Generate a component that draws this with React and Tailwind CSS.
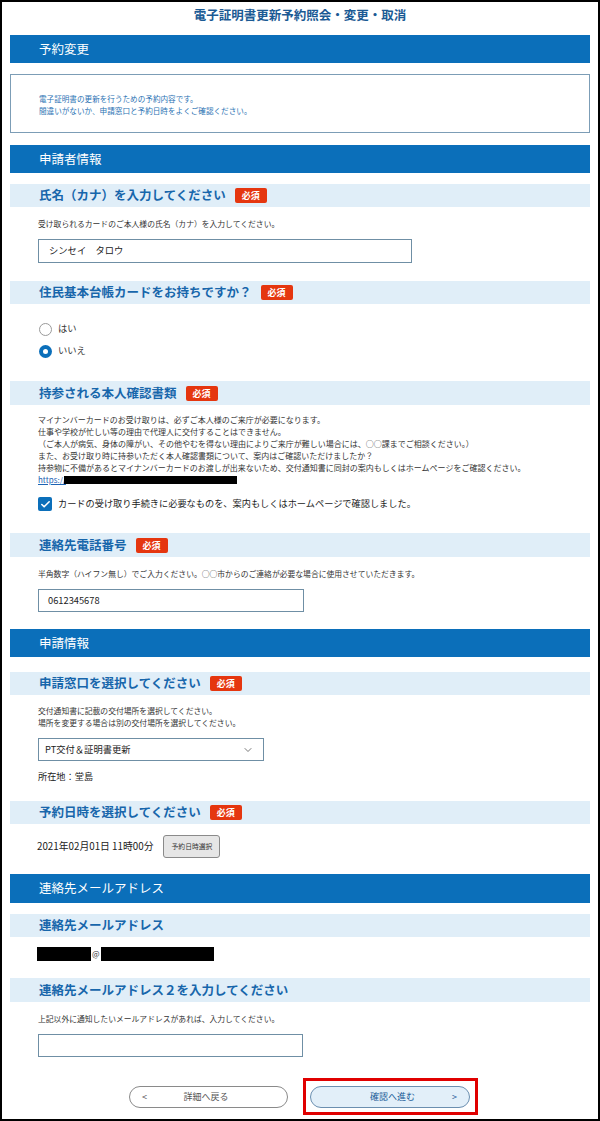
import { ChevronDown, Check } from "lucide-react";

const FONT = { fontFamily: "'Noto Sans CJK JP', 'Noto Sans', sans-serif" };

function Band({ children, className = "" }) {
  return (
    <div className={`h-[28px] bg-[#0b6fba] flex items-center pl-[29px] text-[12.5px] text-white ${className}`}>
      {children}
    </div>
  );
}

function Badge() {
  return (
    <span className="ml-[9px] inline-flex items-center h-[15px] px-[7px] rounded-[2px] bg-[#e5360f] text-white text-[9px] font-bold leading-none">
      必須
    </span>
  );
}

function FieldHead({ children, required = true, className = "" }) {
  return (
    <div className={`h-[23px] bg-[#e0eef8] flex items-center pl-[29px] ${className}`}>
      <span className="text-[12.5px] font-bold text-[#1766ab] leading-none">{children}</span>
      {required && <Badge />}
    </div>
  );
}

function Desc({ children, className = "" }) {
  return (
    <p className={`pl-[28px] text-[7.8px] leading-[12px] text-[#333] ${className}`}>{children}</p>
  );
}

export default function App() {
  return (
    <div style={FONT} className="w-[600px] h-[1121px] border-2 border-black bg-white overflow-hidden">
      <div className="px-[8px]">
        {/* Title */}
        <div className="h-[33px] pb-[6px] flex items-center justify-center">
          <h1 className="text-[12.5px] font-bold text-[#1b5a94]">電子証明書更新予約照会・変更・取消</h1>
        </div>

        <Band>予約変更</Band>

        <div className="mt-[11px] h-[59px] border border-[#7c9db6] pl-[28px] pt-[18px] text-[7.6px] leading-[12px] text-[#2a72b3]">
          <p>電子証明書の更新を行うための予約内容です。</p>
          <p>間違いがないか、申請窓口と予約日時をよくご確認ください。</p>
        </div>

        <Band className="mt-[12px] h-[27px]">申請者情報</Band>

        {/* Name */}
        <FieldHead className="mt-[11px]">氏名（カナ）を入力してください</FieldHead>
        <Desc className="mt-[11px]">受け取られるカードのご本人様の氏名（カナ）を入力してください。</Desc>
        <div className="mt-[9px] ml-[28px] w-[374px] h-[24px] border border-[#6f8fa5] flex items-center pl-[10px] text-[9.3px] text-[#222]">
          シンセイ　タロウ
        </div>

        {/* Juki card */}
        <FieldHead className="mt-[18px]">住民基本台帳カードをお持ちですか？</FieldHead>
        <div className="mt-[16px] pl-[29px] flex flex-col gap-[4px]">
          <div className="h-[18px] flex items-center gap-[6px]">
            <span className="w-[13px] h-[13px] rounded-full border border-[#9a9a9a] bg-white"></span>
            <span className="text-[9.3px] text-[#333]">はい</span>
          </div>
          <div className="h-[18px] flex items-center gap-[6px]">
            <span className="w-[13px] h-[13px] rounded-full bg-[#0b6fba] flex items-center justify-center">
              <span className="w-[5px] h-[5px] rounded-full bg-white"></span>
            </span>
            <span className="text-[9.3px] text-[#333]">いいえ</span>
          </div>
        </div>

        {/* ID docs */}
        <FieldHead className="mt-[21px] h-[24px]">持参される本人確認書類</FieldHead>
        <div className="mt-[9px] pl-[28px] text-[8px] leading-[12px] text-[#333]">
          <p>マイナンバーカードのお受け取りは、必ずご本人様のご来庁が必要になります。</p>
          <p>仕事や学校が忙しい等の理由で代理人に交付することはできません。</p>
          <p>（ご本人が病気、身体の障がい、その他やむを得ない理由によりご来庁が難しい場合には、○○課までご相談ください。）</p>
          <p>また、お受け取り時に持参いただく本人確認書類について、案内はご確認いただけましたか？</p>
          <p>持参物に不備があるとマイナンバーカードのお渡しが出来ないため、交付通知書に同封の案内もしくはホームページをご確認ください。</p>
          <p className="flex items-center">
            <span className="text-[#1d63b3] underline">https://</span>
            <span className="ml-[-2px] w-[173px] h-[8px] bg-black"></span>
          </p>
        </div>
        <div className="mt-[9px] h-[18px] pl-[28px] flex items-center gap-[6px]">
          <span className="w-[14px] h-[14px] rounded-[2px] bg-[#0b6fba] flex items-center justify-center">
            <Check size={11} strokeWidth={3.5} color="#fff" />
          </span>
          <span className="text-[9.2px] text-[#222]">カードの受け取り手続きに必要なものを、案内もしくはホームページで確認しました。</span>
        </div>

        {/* Phone */}
        <FieldHead className="mt-[20px] h-[24px]">連絡先電話番号</FieldHead>
        <Desc className="mt-[11px]">半角数字（ハイフン無し）でご入力ください。○○市からのご連絡が必要な場合に使用させていただきます。</Desc>
        <div className="mt-[9px] ml-[28px] w-[266px] h-[23px] border border-[#6f8fa5] flex items-center pl-[9px] text-[9.3px] text-[#222]">
          0612345678
        </div>

        <Band className="mt-[17px]">申請情報</Band>

        {/* Window */}
        <FieldHead className="mt-[15px]">申請窓口を選択してください</FieldHead>
        <div className="mt-[10px] pl-[28px] text-[7.8px] leading-[11.5px] text-[#333]">
          <p>交付通知書に記載の交付場所を選択してください。</p>
          <p>場所を変更する場合は別の交付場所を選択してください。</p>
        </div>
        <div className="mt-[10px] ml-[28px] w-[226px] h-[23px] border border-[#6f8fa5] flex items-center justify-between pl-[6px] pr-[9px] text-[9.3px] text-[#222]">
          <span>PT交付＆証明書更新</span>
          <ChevronDown size={12} strokeWidth={1.6} color="#555" />
        </div>
        <p className="mt-[8px] pl-[28px] text-[9.2px] leading-[14px] text-[#222]">所在地：堂島</p>

        {/* Date */}
        <FieldHead className="mt-[18px]">予約日時を選択してください</FieldHead>
        <div className="mt-[11px] h-[23px] pl-[27px] flex items-center">
          <span className="text-[9.8px] text-[#222]">2021年02月01日 11時00分</span>
          <span className="ml-[10px] h-[23px] w-[57px] flex items-center justify-center rounded-[3px] border border-[#8a8a8a] bg-[#e6e6e6] text-[6.8px] text-[#333]">
            予約日時選択
          </span>
        </div>

        <Band className="mt-[16px] h-[29px]">連絡先メールアドレス</Band>

        {/* Mail */}
        <FieldHead className="mt-[11px]" required={false}>連絡先メールアドレス</FieldHead>
        <div className="mt-[10px] h-[14px] pl-[27px] flex items-center">
          <span className="w-[54px] h-[14px] bg-black"></span>
          <span className="mx-[1px] text-[8px] text-[#333] leading-none">@</span>
          <span className="w-[113px] h-[14px] bg-black"></span>
        </div>

        <FieldHead className="mt-[17px] h-[24px]" required={false}>連絡先メールアドレス２を入力してください</FieldHead>
        <Desc className="mt-[11px]">上記以外に通知したいメールアドレスがあれば、入力してください。</Desc>
        <div className="mt-[9px] ml-[28px] w-[265px] h-[23px] border border-[#6f8fa5]"></div>

        {/* Buttons */}
        <div className="mt-[21px] flex items-center">
          <button className="ml-[119px] w-[159px] h-[22px] rounded-full border border-[#8a8a8a] bg-white flex items-center px-[12px] text-[9px] text-[#555]">
            <span>&lt;</span>
            <span className="flex-1 text-center pr-[10px]">詳細へ戻る</span>
          </button>
          <div className="ml-[15px] w-[175px] h-[37px] border-[3px] border-[#e00000] flex items-center pl-[4px]">
            <button className="w-[160px] h-[22px] rounded-full border border-[#6b8fb0] bg-[#e2eff9] flex items-center px-[12px] text-[9px] text-[#1b5d98]">
              <span className="flex-1 text-center pl-[10px]">確認へ進む</span>
              <span>&gt;</span>
            </button>
          </div>
        </div>
      </div>
    </div>
  );
}
